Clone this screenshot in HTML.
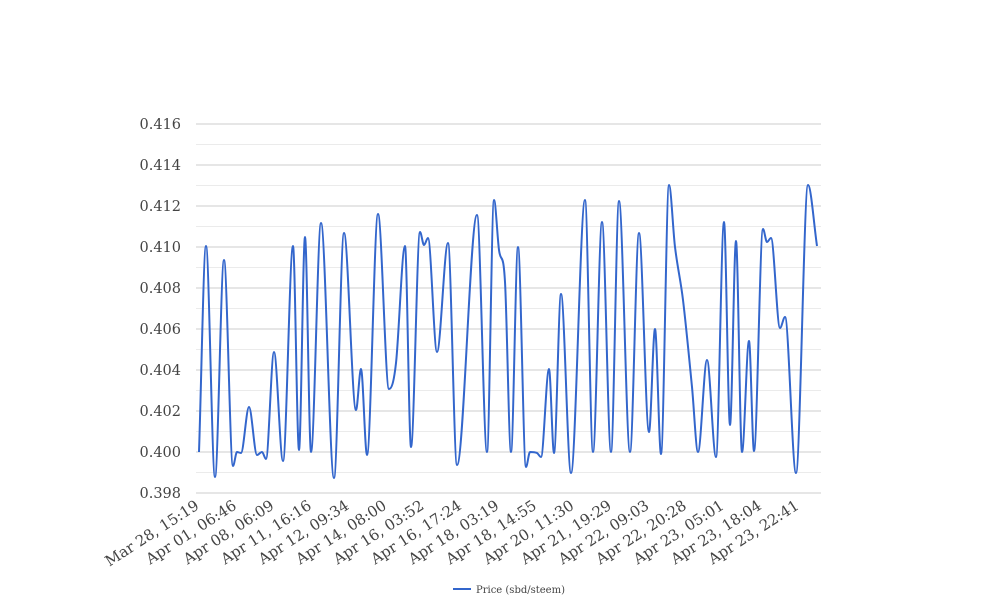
<!DOCTYPE html>
<html><head><meta charset="utf-8">
<style>
html,body{margin:0;padding:0;background:#fff;width:1008px;height:616px;overflow:hidden}
svg{display:block}
text{font-family:"DejaVu Serif","Liberation Serif",serif;fill:#444}
</style></head>
<body>
<svg id="c" width="1008" height="616" viewBox="0 0 1008 616" xmlns="http://www.w3.org/2000/svg">
<g stroke="#ebebeb" stroke-width="1">
<line x1="196" x2="821" y1="144.5" y2="144.5"/><line x1="196" x2="821" y1="185.5" y2="185.5"/>
<line x1="196" x2="821" y1="226.5" y2="226.5"/><line x1="196" x2="821" y1="267.5" y2="267.5"/>
<line x1="196" x2="821" y1="308.5" y2="308.5"/><line x1="196" x2="821" y1="349.5" y2="349.5"/>
<line x1="196" x2="821" y1="390.5" y2="390.5"/><line x1="196" x2="821" y1="431.5" y2="431.5"/>
<line x1="196" x2="821" y1="472.5" y2="472.5"/>
</g>
<g stroke="#cccccc" stroke-width="1">
<line x1="196" x2="821" y1="124" y2="124"/><line x1="196" x2="821" y1="165" y2="165"/>
<line x1="196" x2="821" y1="206" y2="206"/><line x1="196" x2="821" y1="247" y2="247"/>
<line x1="196" x2="821" y1="288" y2="288"/><line x1="196" x2="821" y1="329" y2="329"/>
<line x1="196" x2="821" y1="370" y2="370"/><line x1="196" x2="821" y1="411" y2="411"/>
<line x1="196" x2="821" y1="452" y2="452"/><line x1="196" x2="821" y1="493" y2="493"/>
</g>
<g font-size="14.5" text-anchor="end">
<text x="181" y="129">0.416</text><text x="181" y="170">0.414</text>
<text x="181" y="211">0.412</text><text x="181" y="252">0.410</text>
<text x="181" y="293">0.408</text><text x="181" y="334">0.406</text>
<text x="181" y="375">0.404</text><text x="181" y="416">0.402</text>
<text x="181" y="457">0.400</text><text x="181" y="498">0.398</text>
</g>
<g id="xl" font-size="15" text-anchor="end"></g>
<path id="ln" fill="none" stroke="#3366cc" stroke-width="2"/>
<line x1="453" x2="471" y1="589" y2="589" stroke="#3366cc" stroke-width="2"/>
<text x="476" y="593" font-size="10" fill="#222">Price (sbd/steem)</text>
</svg>
<script>
var labels=["Mar 28, 15:19","Apr 01, 06:46","Apr 08, 06:09","Apr 11, 16:16","Apr 12, 09:34","Apr 14, 08:00","Apr 16, 03:52","Apr 16, 17:24","Apr 18, 03:19","Apr 18, 14:55","Apr 20, 11:30","Apr 21, 19:29","Apr 22, 09:03","Apr 22, 20:28","Apr 23, 05:01","Apr 23, 18:04","Apr 23, 22:41"];
var g=document.getElementById('xl'),ns="http://www.w3.org/2000/svg";
labels.forEach(function(s,i){var x=200+i*37.5,y=508;var t=document.createElementNS(ns,'text');
t.setAttribute('x',x);t.setAttribute('y',y);t.setAttribute('transform','rotate(-33 '+x+' '+y+')');t.textContent=s;g.appendChild(t);});
var p=[[199,452],[206,246],[215,477],[224,260],[233,466],[237,452],[241,453],[249,407],[257,455],[262,452],[266,459],[274,352],[283,461],[293,246],[299,450],[305,237],[311,452],[321,223],[334,478],[344,233],[356,410],[361,369],[367,455],[378,214],[389,389],[396,363],[405,246],[411,447],[420,232],[424,245],[428,238],[437,352],[448,243],[457,465],[477,215],[487,452],[494,200],[499,250],[505,282],[511,452],[518,247],[526,467],[530,452],[537,453],[541,457],[549,369],[554,453],[561,294],[571,473],[585,200],[593,452],[602,222],[611,452],[619,201],[630,452],[639,233],[649,432],[655,329],[661,454],[669,185],[675,247],[683,300],[692,387],[698,452],[707,360],[716,457],[724,222],[730,425],[736,241],[742,452],[749,341],[754,451],[763,229],[767,242],[771,238],[780,328],[785,317],[796,473],[808,185],[817,246]];
var n=p.length,m=[];
for(var i=0;i<n;i++){
 if(i==0||i==n-1){m.push(i==0?(p[1][1]-p[0][1])/(p[1][0]-p[0][0]):(p[n-1][1]-p[n-2][1])/(p[n-1][0]-p[n-2][0]));continue;}
 var a=p[i-1][1]-p[i][1],b=p[i+1][1]-p[i][1];
 if(a*b>=0)m.push(0);else m.push((p[i+1][1]-p[i-1][1])/(p[i+1][0]-p[i-1][0]));
}
var d="M"+p[0][0]+" "+p[0][1];
for(var i=1;i<n;i++){var A=p[i-1],B=p[i],dx=(B[0]-A[0])/3;
d+=" C"+(A[0]+dx)+" "+(A[1]+m[i-1]*dx)+" "+(B[0]-dx)+" "+(B[1]-m[i]*dx)+" "+B[0]+" "+B[1];}
document.getElementById('ln').setAttribute('d',d);
</script>
</body></html>
